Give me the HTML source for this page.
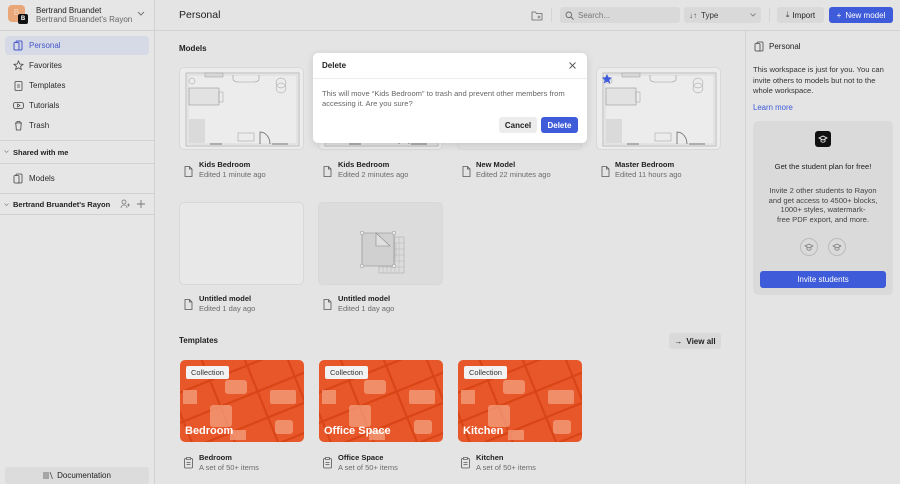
<!DOCTYPE html>
<html><head><meta charset="utf-8">
<style>
*{box-sizing:border-box;margin:0;padding:0}
body{width:900px;height:484px;overflow:hidden;background:#e4e4e4;font-family:"Liberation Sans",sans-serif;color:#1e1e1e;position:relative;font-size:8px}
.a{position:absolute}
.side{left:0;top:0;width:155px;height:484px;background:#e6e6e6;border-right:1px solid #d2d2d2}
.hl{height:1px;background:#d2d2d2;position:absolute}
.nav{position:absolute;left:5px;width:144px;height:19px;display:flex;align-items:center;padding-left:8px;font-size:8px;color:#2a2a2a}
.nav svg{margin-right:5px}
.sec{position:absolute;left:4px;font-size:7.5px;font-weight:bold;color:#222}
.thumb{position:absolute;width:125px;height:83px;background:#ececec;border:1px solid #d8d8d8;border-radius:5px;overflow:hidden}
.blank{background:#e2e2e2;border-color:#d8d8d8}
.ct{position:absolute;font-size:7.5px;font-weight:bold;color:#1e1e1e}
.cs{position:absolute;font-size:7.5px;color:#6b6b6b}
.fi{position:absolute}
.tpl{position:absolute;width:124px;height:82px;border-radius:5px;background:#e8572a;overflow:hidden}
.tag{position:absolute;left:6px;top:6px;background:#f2f2f2;color:#333;font-size:7.5px;padding:2px 5px;border-radius:2px}
.tname{position:absolute;left:5px;bottom:5px;color:#fff;font-weight:bold;font-size:11px}
.btn{position:absolute;display:flex;align-items:center;justify-content:center;border-radius:3px;font-size:8px}
</style></head><body>

<!-- Sidebar -->
<div class="a side"></div>
<div class="a" style="left:8px;top:5px;width:17px;height:17px;border-radius:4px;background:#e9a779;color:#f7d6bf;font-size:8px;text-align:center;line-height:16px">B</div>
<div class="a" style="left:18px;top:14px;width:10px;height:10px;border-radius:2px;background:#111;color:#fff;font-size:6px;font-weight:bold;text-align:center;line-height:10px">B</div>
<div class="a" style="left:36px;top:6px;font-size:8px;color:#222">Bertrand Bruandet</div>
<div class="a" style="left:36px;top:15px;font-size:8px;color:#666">Bertrand Bruandet's Rayon</div>
<svg class="a" style="left:137px;top:11px" width="8" height="6"><path d="M1 1l3 3 3-3" fill="none" stroke="#777" stroke-width="1"/></svg>
<div class="hl" style="left:0;top:30px;width:155px"></div>

<div class="nav" style="top:36px;background:#d6dae6;border-radius:4px;color:#4658c9"><svg width="11" height="11"><rect x="3" y="1" width="6" height="9" rx="1" fill="none" stroke="#4658c9"/><rect x="1" y="2.5" width="5" height="7.5" rx="1" fill="#d6dae6" stroke="#4658c9"/></svg>Personal</div>
<div class="nav" style="top:56px"><svg width="11" height="11"><path d="M5.5 1l1.3 3 3.2.3-2.4 2.1.7 3.1-2.8-1.7-2.8 1.7.7-3.1L1 4.3l3.2-.3z" fill="none" stroke="#444" stroke-width=".8"/></svg>Favorites</div>
<div class="nav" style="top:76px"><svg width="11" height="11"><rect x="2" y="1.5" width="7" height="9" rx="1" fill="none" stroke="#444" stroke-width=".8"/><path d="M4 5h3M4 7h3" stroke="#444" stroke-width=".8"/></svg>Templates</div>
<div class="nav" style="top:96px"><svg width="11" height="11"><rect x="0.5" y="2.5" width="10" height="6" rx="2" fill="none" stroke="#444" stroke-width=".8"/><path d="M4.5 4v3l2.5-1.5z" fill="none" stroke="#444" stroke-width=".7"/></svg>Tutorials</div>
<div class="nav" style="top:116px"><svg width="11" height="11"><path d="M2 3h7M4 3V1.5h3V3M2.8 3l.5 7h4.4l.5-7" fill="none" stroke="#444" stroke-width=".8"/></svg>Trash</div>
<div class="hl" style="left:0;top:140px;width:155px"></div>
<svg class="a" style="left:4px;top:150px" width="5" height="4"><path d="M.5 .5l2 2 2-2" fill="none" stroke="#888" stroke-width=".7"/></svg>
<div class="sec" style="left:13px;top:148px">Shared with me</div>
<div class="hl" style="left:0;top:163px;width:155px"></div>
<div class="nav" style="top:169px"><svg width="11" height="11"><rect x="3" y="1" width="6" height="9" rx="1" fill="none" stroke="#444" stroke-width=".8"/><rect x="1" y="2.5" width="5" height="7.5" rx="1" fill="#e6e6e6" stroke="#444" stroke-width=".8"/></svg>Models</div>
<div class="hl" style="left:0;top:193px;width:155px"></div>
<svg class="a" style="left:4px;top:203px" width="5" height="4"><path d="M.5 .5l2 2 2-2" fill="none" stroke="#888" stroke-width=".7"/></svg>
<div class="sec" style="left:13px;top:200px">Bertrand Bruandet's Rayon</div>
<svg class="a" style="left:120px;top:199px" width="10" height="10"><circle cx="4" cy="3" r="2" fill="none" stroke="#777" stroke-width=".8"/><path d="M1 9c0-2 1.5-3 3-3s3 1 3 3M7 6h3M8.5 4.5v3" fill="none" stroke="#777" stroke-width=".8"/></svg>
<svg class="a" style="left:137px;top:200px" width="8" height="8"><path d="M4 0v8M0 4h8" stroke="#777" stroke-width=".9"/></svg>
<div class="hl" style="left:0;top:214px;width:155px"></div>
<div class="btn" style="left:5px;top:467px;width:144px;height:17px;background:#dcdcdc;color:#222"><svg width="11" height="9" style="margin-right:3px"><path d="M1 1v7M3 1v7M5 1v7M7 1l2.5 7" fill="none" stroke="#555" stroke-width=".8"/></svg>Documentation</div>

<!-- Header -->
<div class="a" style="left:179px;top:9px;font-size:10.5px;color:#1e1e1e">Personal</div>
<div class="hl" style="left:155px;top:30px;width:745px"></div>
<svg class="a" style="left:531px;top:10px" width="12" height="11"><path d="M1 2h3.5l1 1.5H11V10H1z" fill="none" stroke="#666" stroke-width=".8"/><path d="M8 5.5v3M6.5 7h3" stroke="#666" stroke-width=".8"/></svg>
<div class="a" style="left:551px;top:8px;width:1px;height:14px;background:#d4d4d4"></div>
<div class="btn" style="left:560px;top:7px;width:120px;height:16px;background:#d9d9d9;justify-content:flex-start;padding-left:5px;color:#777"><svg width="9" height="9" style="margin-right:4px"><circle cx="3.8" cy="3.8" r="2.8" fill="none" stroke="#666" stroke-width=".9"/><path d="M6 6l2.5 2.5" stroke="#666" stroke-width=".9"/></svg>Search...</div>
<div class="btn" style="left:684px;top:7px;width:77px;height:16px;background:#d9d9d9;justify-content:flex-start;padding-left:5px;color:#333"><span style="font-size:8px;margin-right:4px;color:#555">↓↑</span>Type<svg style="position:absolute;right:5px;top:6px" width="6" height="4"><path d="M.5 .5l2.5 2.5 2.5-2.5" fill="none" stroke="#777" stroke-width=".8"/></svg></div>
<div class="a" style="left:769px;top:8px;width:1px;height:14px;background:#d4d4d4"></div>
<div class="btn" style="left:777px;top:7px;width:47px;height:16px;background:#d9d9d9;color:#222"><span style="margin-right:3px;color:#444">⤓</span>Import</div>
<div class="btn" style="left:829px;top:7px;width:64px;height:16px;background:#3e5bd9;color:#fff"><span style="margin-right:4px">+</span>New model</div>

<!-- Right panel -->
<div class="a" style="left:745px;top:30px;width:1px;height:454px;background:#d2d2d2"></div>
<svg class="a" style="left:754px;top:41px" width="11" height="11"><rect x="3" y="1" width="6" height="9" rx="1" fill="none" stroke="#444" stroke-width=".8"/><rect x="1" y="2.5" width="5" height="7.5" rx="1" fill="#e4e4e4" stroke="#444" stroke-width=".8"/></svg>
<div class="a" style="left:769px;top:42px;font-size:8px;color:#222">Personal</div>
<div class="a" style="left:753px;top:65px;width:140px;font-size:7.6px;line-height:10.5px;color:#333">This workspace is just for you. You can invite others to models but not to the whole workspace.</div>
<div class="a" style="left:753px;top:103px;font-size:7.8px;color:#3e5bd9">Learn more</div>
<div class="a" style="left:753px;top:121px;width:140px;height:174px;background:#dadada;border-radius:5px"></div>
<div class="a" style="left:815px;top:131px;width:16px;height:16px;background:#111;border-radius:3px"></div>
<svg class="a" style="left:818px;top:134px" width="10" height="10"><path d="M1 4l4-2 4 2-4 2zM3 5v2.5c1 1 3 1 4 0V5" fill="none" stroke="#fff" stroke-width=".8"/></svg>
<div class="a" style="left:753px;top:162px;width:140px;text-align:center;font-size:7.6px;color:#222">Get the student plan for free!</div>
<div class="a" style="left:753px;top:186px;width:140px;text-align:center;font-size:7.6px;line-height:9.5px;color:#444">Invite 2 other students to Rayon<br>and get access to 4500+ blocks,<br>1000+ styles, watermark-<br>free PDF export, and more.</div>
<div class="a" style="left:800px;top:238px;width:18px;height:18px;border-radius:50%;border:1px solid #bbb"></div>
<div class="a" style="left:828px;top:238px;width:18px;height:18px;border-radius:50%;border:1px solid #bbb"></div>
<svg class="a" style="left:804px;top:242px" width="10" height="10"><path d="M1 4l4-2 4 2-4 2zM3 5v2.5c1 1 3 1 4 0V5" fill="none" stroke="#777" stroke-width=".7"/></svg>
<svg class="a" style="left:832px;top:242px" width="10" height="10"><path d="M1 4l4-2 4 2-4 2zM3 5v2.5c1 1 3 1 4 0V5" fill="none" stroke="#777" stroke-width=".7"/></svg>
<div class="btn" style="left:760px;top:271px;width:126px;height:17px;background:#3e5bd9;color:#fff">Invite students</div>

<!-- Models -->
<div class="a" style="left:179px;top:44px;font-size:8px;font-weight:bold">Models</div>

<svg width="0" height="0" style="position:absolute"><defs>
<g id="fp">
<rect x="6" y="5" width="113" height="73" fill="none" stroke="#b0b0b0" stroke-width=".8"/>
<rect x="8" y="7" width="109" height="69" fill="none" stroke="#c8c8c8" stroke-width=".5"/>
<rect x="25" y="5" width="18" height="4" fill="#d8d8d8" stroke="#999" stroke-width=".5"/>
<path d="M53 7v4a5 3 0 0 0 5 3h16a5 3 0 0 0 5-3V7" fill="none" stroke="#999" stroke-width=".6"/>
<circle cx="12" cy="13" r="3" fill="none" stroke="#999" stroke-width=".5"/>
<circle cx="101" cy="15" r="5" fill="none" stroke="#999" stroke-width=".5"/><circle cx="101" cy="20" r="5" fill="none" stroke="#999" stroke-width=".5"/>
<rect x="9" y="20" width="30" height="17" fill="#e2e2e2" stroke="#999" stroke-width=".6"/>
<rect x="39" y="24" width="4" height="10" fill="none" stroke="#999" stroke-width=".5"/>
<rect x="9" y="51" width="16" height="24" fill="#dadada"/>
<rect x="58" y="65" width="16" height="8" fill="none" stroke="#999" stroke-width=".5"/>
<path d="M80 76v-12a10 12 0 0 1 10 12" fill="none" stroke="#666" stroke-width=".8"/>
<path d="M30 76h12M92 76h16" stroke="#888" stroke-width="1.2"/>
</g></defs></svg>

<div class="thumb" style="left:179px;top:67px"><svg width="125" height="83"><use href="#fp"/></svg></div>
<div class="thumb" style="left:318px;top:67px"><svg width="125" height="83"><use href="#fp"/></svg></div>
<div class="thumb blank" style="left:457px;top:67px"></div>
<div class="thumb" style="left:596px;top:67px"><svg width="125" height="83"><use href="#fp"/><path d="M10 6l1.5 3.3 3.6.3-2.7 2.4.8 3.5-3.2-1.9-3.2 1.9.8-3.5-2.7-2.4 3.6-.3z" fill="#3e5bd9"/></svg></div>

<svg width="0" height="0" style="position:absolute"><defs><g id="doc"><path d="M1 .5h4.5L8 3v7.5H1z" fill="none" stroke="#555" stroke-width=".8"/><path d="M5.5 .5V3H8" fill="none" stroke="#555" stroke-width=".8"/></g>
<g id="clip"><rect x=".5" y="1.5" width="8" height="9.5" rx="1" fill="none" stroke="#555" stroke-width=".8"/><rect x="2.5" y=".5" width="4" height="2" fill="#e4e4e4" stroke="#555" stroke-width=".7"/><path d="M2.5 5.5h4M2.5 7.5h4" stroke="#555" stroke-width=".7"/></g></defs></svg>

<svg class="fi" style="left:184px;top:166px" width="9" height="11"><use href="#doc"/></svg>
<div class="ct" style="left:199px;top:160px">Kids Bedroom</div><div class="cs" style="left:199px;top:170px">Edited 1 minute ago</div>
<svg class="fi" style="left:323px;top:166px" width="9" height="11"><use href="#doc"/></svg>
<div class="ct" style="left:338px;top:160px">Kids Bedroom</div><div class="cs" style="left:338px;top:170px">Edited 2 minutes ago</div>
<svg class="fi" style="left:462px;top:166px" width="9" height="11"><use href="#doc"/></svg>
<div class="ct" style="left:476px;top:160px">New Model</div><div class="cs" style="left:476px;top:170px">Edited 22 minutes ago</div>
<svg class="fi" style="left:601px;top:166px" width="9" height="11"><use href="#doc"/></svg>
<div class="ct" style="left:615px;top:160px">Master Bedroom</div><div class="cs" style="left:615px;top:170px">Edited 11 hours ago</div>

<div class="thumb blank" style="left:179px;top:202px;background:#e8e8e8"></div>
<div class="thumb blank" style="left:318px;top:202px;background:#dcdcdc"><svg width="125" height="83"><path d="M53 30h15l10 12v14H43z" fill="#d2d2d2"/><rect x="60" y="34" width="25" height="36" fill="none" stroke="#999" stroke-width=".4"/><path d="M64 34v36M68 34v36M72 34v36M76 34v36M80 34v36M60 40h25M60 46h25M60 52h25M60 58h25M60 64h25" stroke="#aaa" stroke-width=".4"/><path d="M43 30h32v33H43z" fill="#d0d0d0" stroke="#888" stroke-width=".6"/><path d="M57 30v13h14z" fill="#e0e0e0" stroke="#888" stroke-width=".6"/><circle cx="43" cy="30" r="1.8" fill="#eee" stroke="#888" stroke-width=".5"/><circle cx="75" cy="30" r="1.8" fill="#eee" stroke="#888" stroke-width=".5"/><circle cx="43" cy="63" r="1.8" fill="#eee" stroke="#888" stroke-width=".5"/><circle cx="75" cy="63" r="1.8" fill="#eee" stroke="#888" stroke-width=".5"/></svg></div>
<svg class="fi" style="left:184px;top:299px" width="9" height="11"><use href="#doc"/></svg>
<div class="ct" style="left:199px;top:294px">Untitled model</div><div class="cs" style="left:199px;top:304px">Edited 1 day ago</div>
<svg class="fi" style="left:323px;top:299px" width="9" height="11"><use href="#doc"/></svg>
<div class="ct" style="left:338px;top:294px">Untitled model</div><div class="cs" style="left:338px;top:304px">Edited 1 day ago</div>

<!-- Templates -->
<div class="a" style="left:179px;top:336px;font-size:8px;font-weight:bold">Templates</div>
<div class="btn" style="left:669px;top:333px;width:52px;height:16px;background:#d9d9d9;color:#222;font-weight:bold"><span style="margin-right:4px;font-weight:normal">→</span>View all</div>

<svg width="0" height="0" style="position:absolute"><defs><g id="pat">
<g transform="rotate(-22 62 41)" stroke="#d94516" stroke-width="2.2">
<path d="M-40 10h200M-40 38h200M-40 66h200M-40 94h200M-40 122h200"/>
<path d="M0 -60v200M40 -60v200M80 -60v200M120 -60v200"/>
</g>
<g fill="#f4a181" opacity=".75"><rect x="45" y="20" width="22" height="14" rx="3"/><rect x="90" y="30" width="26" height="14" rx="2"/><rect x="3" y="30" width="14" height="14"/><rect x="30" y="45" width="22" height="22" rx="3"/><rect x="95" y="60" width="18" height="14" rx="3"/><rect x="50" y="70" width="16" height="10"/></g>
</g></defs></svg>

<div class="tpl" style="left:180px;top:360px"><svg width="124" height="82" style="position:absolute"><use href="#pat"/></svg><div class="tag">Collection</div><div class="tname">Bedroom</div></div>
<div class="tpl" style="left:319px;top:360px"><svg width="124" height="82" style="position:absolute"><use href="#pat"/></svg><div class="tag">Collection</div><div class="tname">Office Space</div></div>
<div class="tpl" style="left:458px;top:360px"><svg width="124" height="82" style="position:absolute"><use href="#pat"/></svg><div class="tag">Collection</div><div class="tname">Kitchen</div></div>

<svg class="fi" style="left:184px;top:457px" width="9" height="12"><use href="#clip"/></svg>
<div class="ct" style="left:199px;top:453px">Bedroom</div><div class="cs" style="left:199px;top:463px">A set of 50+ items</div>
<svg class="fi" style="left:323px;top:457px" width="9" height="12"><use href="#clip"/></svg>
<div class="ct" style="left:338px;top:453px">Office Space</div><div class="cs" style="left:338px;top:463px">A set of 50+ items</div>
<svg class="fi" style="left:461px;top:457px" width="9" height="12"><use href="#clip"/></svg>
<div class="ct" style="left:476px;top:453px">Kitchen</div><div class="cs" style="left:476px;top:463px">A set of 50+ items</div>

<!-- Modal -->
<div class="a" style="left:313px;top:53px;width:274px;height:90px;background:#fff;border-radius:5px;box-shadow:0 2px 8px rgba(0,0,0,.12)"></div>
<div class="a" style="left:322px;top:61px;font-size:8px;font-weight:bold;color:#222">Delete</div>
<svg class="a" style="left:569px;top:62px" width="7" height="7"><path d="M.5 .5l6 6M6.5 .5l-6 6" stroke="#555" stroke-width=".9"/></svg>
<div class="hl" style="left:313px;top:78px;width:274px;background:#ececec"></div>
<div class="a" style="left:322px;top:89px;width:255px;font-size:7.6px;line-height:9.8px;color:#666">This will move “Kids Bedroom” to trash and prevent other members from accessing it. Are you sure?</div>
<div class="btn" style="left:499px;top:117px;width:38px;height:16px;background:#ececec;color:#222;font-weight:bold">Cancel</div>
<div class="btn" style="left:541px;top:117px;width:37px;height:16px;background:#3e5bd9;color:#fff;font-weight:bold">Delete</div>

</body></html>
